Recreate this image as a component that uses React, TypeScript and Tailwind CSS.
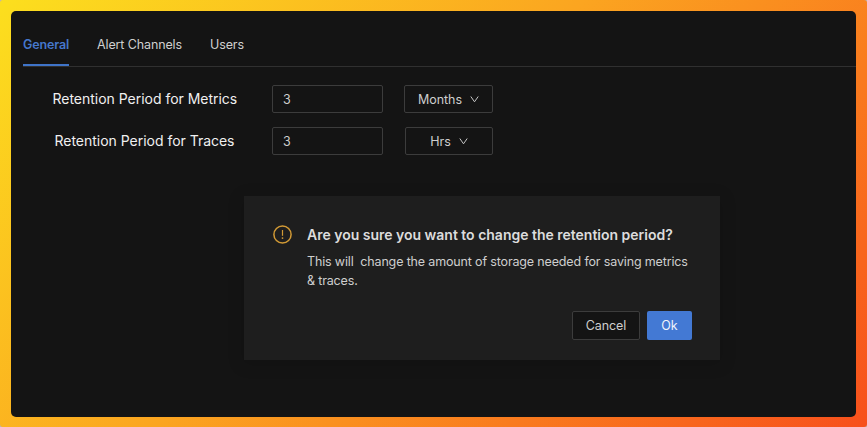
import React from 'react';

const tabs = [
  { label: 'General', style: 'w-[46px] mr-7 font-semibold text-[#4577cb] border-[#3f74c8] tracking-[-0.15px]' },
  { label: 'Alert Channels', style: 'w-[85px] mr-7 text-[#cfcfcf] border-transparent tracking-[-0.12px]' },
  { label: 'Users', style: 'w-[34px] text-[#cfcfcf] border-transparent tracking-[-0.12px]' },
];

function Chevron() {
  return (
    <svg className="h-[7px] w-[9px]" viewBox="0 0 9 7" fill="none" stroke="#c4c4c4" strokeWidth="1">
      <path d="M.8 .5 4.5 5.8 8.2 .5" />
    </svg>
  );
}

function RetentionRow({ label, unit, labelClass, unitClass }: { label: string; unit: string; labelClass: string; unitClass: string }) {
  return (
    <div className="flex h-7 items-center">
      <div className={`shrink-0 whitespace-nowrap pb-[2px] text-[14px] tracking-[-0.02px] text-[#f0f0f0] ${labelClass}`}>{label}</div>
      <div className="flex h-7 w-[111px] shrink-0 items-center rounded-[2px] border border-[#3c3c3c] px-[10px] pt-[2px] text-[12.5px]">3</div>
      <button className={`flex h-7 shrink-0 items-center justify-center gap-2 rounded-[2px] border border-[#3c3c3c] text-[12.5px] tracking-[-0.04px] ${unitClass}`}>
        <span className="pt-[2px]">{unit}</span>
        <Chevron />
      </button>
    </div>
  );
}

function ConfirmDialog() {
  return (
    <div className="absolute left-[233.4px] top-[185px] flex h-[164px] w-[475.6px] flex-col bg-[#1e1e1e] pl-[28.6px] pr-7 pt-[29px] shadow-[0_3px_14px_3px_rgba(0,0,0,0.1)]">
      <div className="flex">
        <svg className="h-[19px] w-[19px] shrink-0" viewBox="0 0 19 19" fill="none" stroke="#d29a35" strokeWidth="1.5">
          <circle cx="9.5" cy="9.5" r="8.6" />
          <path d="M9.5 5v5.8" strokeWidth="1.2" />
          <circle cx="9.5" cy="13.1" r=".9" fill="#d29a35" stroke="none" />
        </svg>
        <div className="ml-[15px] whitespace-nowrap">
          <h2 className="text-[14px] font-semibold leading-[20px] tracking-[-0.01px] text-[#dcdcdc]">Are you sure you want to change the retention period?</h2>
          <p className="mt-[7px] whitespace-pre text-[12.5px] leading-[19px] tracking-[-0.15px] text-[#cecece]">
            {'This will  change the amount of storage needed for saving metrics\n& traces.'}
          </p>
        </div>
      </div>
      <div className="mt-[21px] flex justify-end gap-[7px] text-[12.5px] tracking-[-0.06px]">
        <button className="h-[29px] w-[68px] rounded-[2px] border border-[#3c3c3c] bg-[#141414] pt-px text-[#cecece]">Cancel</button>
        <button className="h-[29px] w-[45px] rounded-[2px] bg-[#4379d4] pt-px text-[#f0f4fb]">Ok</button>
      </div>
    </div>
  );
}

export default function App() {
  return (
    <div className="h-[427px] w-[867px] bg-[#bcb6b0]">
      <div className="h-full w-full rounded-[3px] bg-[linear-gradient(135deg,#fcdf1e,#fba520_45%,#f7501c)] p-[11px] pb-[10px] font-['Inter',sans-serif]">
        <main className="relative h-full w-[845px] rounded-[5px] bg-[#141414] pl-3 text-[#cecece]">
          <nav className="flex h-14 border-b border-[#303030]">
            {tabs.map((tab) => (
              <div key={tab.label} className={`h-[55px] whitespace-nowrap border-b-2 pt-[25px] text-[12.5px] leading-[18px] ${tab.style}`}>
                {tab.label}
              </div>
            ))}
          </nav>
          <section className="flex flex-col gap-[14px] pt-[18px]">
            <RetentionRow label="Retention Period for Metrics" unit="Months" labelClass="w-[249px] pl-[29.5px]" unitClass="ml-[21px] w-[89px]" />
            <RetentionRow label="Retention Period for Traces" unit="Hrs" labelClass="w-[249px] pl-[31.5px]" unitClass="ml-[22px] w-[88px]" />
          </section>
          <ConfirmDialog />
        </main>
      </div>
    </div>
  );
}
